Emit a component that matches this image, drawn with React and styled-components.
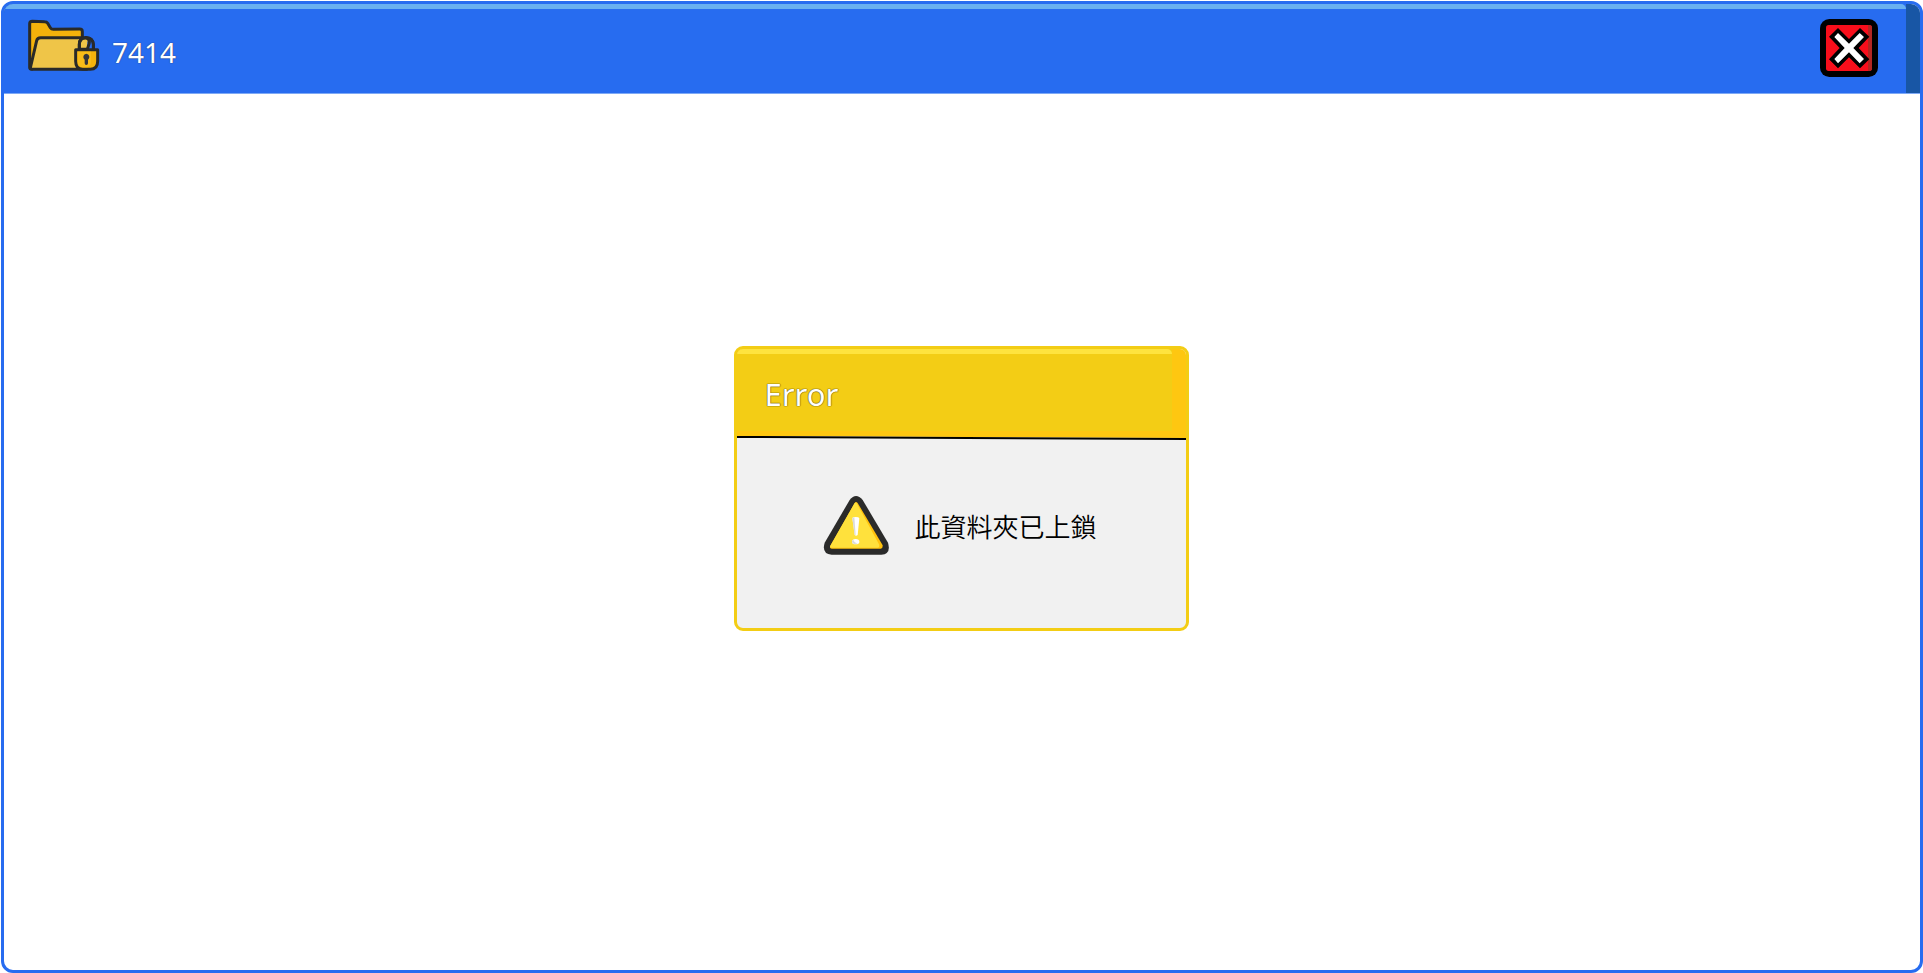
import React from "react";
import styled, { createGlobalStyle } from "styled-components";

const GlobalStyle = createGlobalStyle`
  *, *::before, *::after { box-sizing: border-box; }
  body {
    margin: 0;
    background: #ffffff;
    font-family: "Noto Sans", "Noto Sans CJK TC", sans-serif;
  }
`;

const Page = styled.div`
  display: flex;
  min-height: 100vh;
  padding: 1px 0 0 1px;
`;

const Window = styled.main`
  flex: 1;
  display: flex;
  flex-direction: column;
  border: 3px solid #276cf0;
  border-radius: 12px;
  overflow: hidden;
  background: #ffffff;
`;

const TitleBar = styled.header`
  display: flex;
  height: 89px;
  background: ${(p) => p.$edge};
`;

const TitleFace = styled.div`
  flex: 1;
  display: flex;
  flex-direction: column;
  background: ${(p) => p.$face};
`;

const Highlight = styled.div`
  height: 5px;
  border-radius: 5px 5px 0 0;
  background: ${(p) => p.$color};
`;

const Edge = styled.div`
  width: 14px;
`;

const TitleRow = styled.div`
  display: flex;
  align-items: flex-start;
  padding: 10px 28px 0 23px;
`;

const Title = styled.h1`
  flex: 1;
  margin: 14px 0 0 12px;
  color: #ffffff;
  font-size: 28px;
  line-height: 38px;
  font-weight: 400;
  text-shadow: 0 0 1px #2a3f78, 0 0 1px #2a3f78;
`;

const CloseButton = styled.button`
  display: block;
  padding: 0;
  border: 0;
  background: none;
  cursor: pointer;
  svg { display: block; }
`;

const Body = styled.section`
  flex: 1;
  display: flex;
  align-items: center;
  justify-content: center;
  padding: 0 2px 88px 0;
  border-top: 1px solid #7ea9f5;
`;

const Dialog = styled.div`
  width: 455px;
  border: 3px solid #f3cd15;
  border-radius: 9px;
  overflow: hidden;
  background: #f1f1f1;
`;

const DialogBar = styled(TitleBar)`
  height: 87px;
  padding-bottom: 5px;
`;

const DialogTitle = styled.h2`
  margin: 0;
  padding: 20px 28px 0;
  color: #ffffff;
  font-size: 31px;
  line-height: 40px;
  font-weight: 400;
  text-shadow: 0 0 1px #6b5a10, 0 0 1px #6b5a10, 0 0 1px #6b5a10;
`;

const Divider = styled.svg`
  display: block;
  width: 100%;
  height: 5px;
`;

const Message = styled.div`
  display: flex;
  align-items: center;
  gap: 25px;
  height: 187px;
  padding: 0 0 17px 86px;
`;

const MessageText = styled.p`
  margin: 0;
  color: #000000;
  font-family: "Noto Sans CJK TC", sans-serif;
  font-size: 26px;
  line-height: 38px;
  font-weight: 350;
`;

function LockedFolderIcon() {
  return (
    <svg width="73" height="53" viewBox="21 27 219 159" aria-hidden="true">
      <g stroke="#292a29" strokeWidth="9" strokeLinejoin="round" strokeLinecap="round">
        <path d="M29 172V41q0-7 8-7l37 1q6 0 9 5l8 13q3 5 9 5l79-1q8 0 8 8v30H60L36 178q-7 0-7-6Z" fill="#f4b20b" />
        <path d="M31 174 50 92q2-9 12-9H187q13 0 13 14v81H40q-10 0-9-4Z" fill="#efc548" />
        <path d="M178 118V103q0-20 20-20t22 20v15Z" fill="#efc548" />
        <path d="M207 88q13 3 13 17v13h-18V97Z" fill="#276cf0" stroke="none" />
        <path d="M198 83q13 5 9 19l-5 16" fill="none" />
        <path d="M178 118V103q0-20 20-20t22 20v15" fill="none" />
        <path d="M167 119H233V154q0 24-22 24H188q-21 0-21-24Z" fill="#f4b20b" />
      </g>
      <path d="M173 125H213V156q0 10-10 16H190q-17 0-17-19Z" fill="#f8bb18" />
      <path d="M199 131a10 10 0 0 1 5 18v11q0 5-5 5t-5-5v-11a10 10 0 0 1 5-18Z" fill="#33343b" />
    </svg>
  );
}

function CloseIcon() {
  return (
    <svg width="58" height="58" viewBox="120 57 174 174" aria-hidden="true">
      <rect x="120" y="57" width="174" height="174" rx="28" fill="#000000" />
      <rect x="138" y="75" width="138" height="138" rx="8" fill="#f80e1b" />
      <path d="M264 75h4q8 0 8 8V205q0 8-8 8h-4V75Z" fill="#b22723" />
      <path d="M174 84 207 117 240 84 268 110 236 144 268 178 240 205 207 172 174 205 147 178 179 144 147 110Z" fill="#000000" />
      <path d="M174 99 207 131 239 99 252 111 220 144 252 177 239 190 207 157 174 190 163 177 194 144 163 111Z" fill="#ffffff" />
    </svg>
  );
}

function WarningIcon() {
  return (
    <svg width="67" height="61" viewBox="24 21 201 183" aria-hidden="true">
      <path d="M104 36Q123 12 143 36L219 164Q229 198 199 200H50Q19 198 29 164Z" fill="#2b2b2a" />
      <path d="M119 45Q123 39 128 45L203 172Q204 182 197 182H50Q43 182 46 173Z" fill="#ffc20d" />
      <path d="M119 45Q123 40 127 49L192 169Q195 179 188 179H50Q43 181 46 173Z" fill="#ffe13c" />
      <path d="M112 91q0-4 10-4t11 4l-5 50q-5 4-9 0Z" fill="#ffffff" />
      <path d="M112 91q2-3 6-3l4 54-3-1Z" fill="#dadada" />
      <ellipse cx="122" cy="161" rx="11" ry="8" fill="#ffffff" />
      <path d="M115 155q2 9 14 11-17 6-18-5 0-4 4-6Z" fill="#dadada" />
    </svg>
  );
}

export default function App() {
  return (
    <>
      <GlobalStyle />
      <Page>
        <Window>
          <TitleBar $edge="#1856a5">
            <TitleFace $face="#276cf0">
              <Highlight $color="#69b0f0" />
              <TitleRow>
                <LockedFolderIcon />
                <Title>7414</Title>
                <CloseButton type="button" aria-label="關閉">
                  <CloseIcon />
                </CloseButton>
              </TitleRow>
            </TitleFace>
            <Edge />
          </TitleBar>
          <Body>
            <Dialog role="alertdialog" aria-labelledby="dialog-title" aria-describedby="dialog-message">
              <DialogBar $edge="#fec711">
                <TitleFace $face="#f3cd15">
                  <Highlight $color="#fee33e" />
                  <DialogTitle id="dialog-title">Error</DialogTitle>
                </TitleFace>
                <Edge />
              </DialogBar>
              <Divider viewBox="0 0 449 5" preserveAspectRatio="none" aria-hidden="true">
                <path d="M0 0H449V2L0 0Z" fill="#fec711" />
                <path d="M0 0 449 2V4L0 2Z" fill="#000000" />
              </Divider>
              <Message>
                <WarningIcon />
                <MessageText id="dialog-message">此資料夾已上鎖</MessageText>
              </Message>
            </Dialog>
          </Body>
        </Window>
      </Page>
    </>
  );
}
